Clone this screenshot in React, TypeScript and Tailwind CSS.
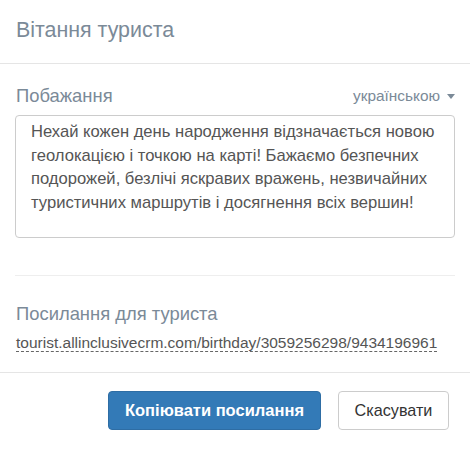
export default function App() {
  const text =
    "Нехай кожен день народження відзначається новою геолокацією і точкою на карті! Бажаємо безпечних подорожей, безлічі яскравих вражень, незвичайних туристичних маршрутів і досягнення всіх вершин!";

  return (
    <div className="w-[470px] h-[452px] bg-white font-['Liberation_Sans',Arial,sans-serif] text-[#555]">
      {/* header */}
      <div className="h-[64px] flex items-center px-[16px] border-b border-[#e5e5e5]">
        <h4 className="text-[21.4px] leading-[26px] text-[#7b8a98] -mt-[3px]">Вітання туриста</h4>
      </div>

      {/* body */}
      <div className="px-[15px]">
        <div className="flex items-center justify-between pt-[20px] mb-[7px]">
          <span className="text-[18.4px] leading-[24px] text-[#7b8a98] pl-[1px]">Побажання</span>
          <button className="flex items-center gap-[7px] text-[15.4px] leading-[24px] text-[#7b8a98]">
            українською
            <span className="w-0 h-0 border-l-[4px] border-r-[4px] border-t-[5px] border-l-transparent border-r-transparent border-t-[#7b8a98]"></span>
          </button>
        </div>
        <textarea
          defaultValue={text}
          className="block w-full h-[123px] resize-none rounded-[4px] border border-[#ccc] px-[15px] py-[4px] text-[16.6px] leading-[23.6px] text-[#555] outline-none"
        />
        <div className="mt-[37px] border-t border-[#eee]"></div>

        <div className="pt-[26px]">
          <div className="text-[18.4px] leading-[24px] text-[#7b8a98] pl-[1px]">Посилання для туриста</div>
          <div className="pt-[5px] pl-[1px]">
            <a className="text-[15.5px] leading-[18px] text-[#555] border-b border-dashed border-[#666] cursor-pointer">
              tourist.allinclusivecrm.com/birthday/3059256298/9434196961
            </a>
          </div>
        </div>
      </div>

      {/* footer */}
      <div className="mt-[17px] border-t border-[#e5e5e5] flex justify-end gap-[17px] pt-[18px] pr-[21px]">
        <button className="h-[39px] w-[213px] rounded-[4px] bg-[#337ab7] border border-[#2e6da4] text-white text-[16.5px] font-bold">
          Копіювати посилання
        </button>
        <button className="h-[39px] w-[111px] rounded-[4px] bg-white border border-[#ccc] text-[#333] text-[16.2px]">
          Скасувати
        </button>
      </div>
    </div>
  );
}
